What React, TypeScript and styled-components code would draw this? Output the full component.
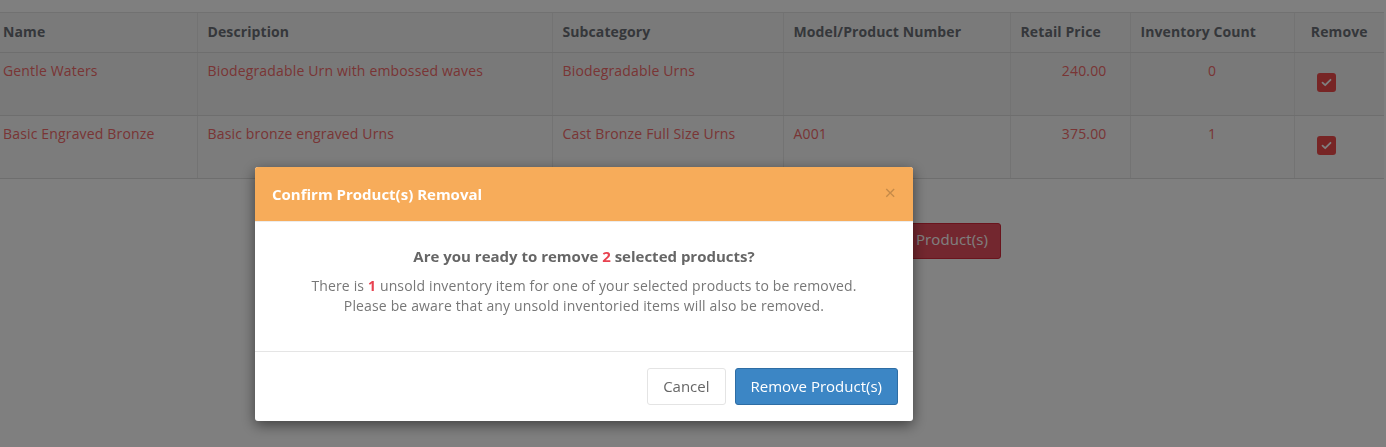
import React from "react";
import styled, { createGlobalStyle } from "styled-components";

const Global = createGlobalStyle`
  html, body { margin: 0; padding: 0; background: #fff; }
  body { font-family: "Open Sans", "Liberation Sans", sans-serif; font-size: 14px; color: #555; }
  * { box-sizing: border-box; }
`;

const Page = styled.div`
  padding-top: 12px;
  min-height: 447px;
`;

const Table = styled.table`
  border-collapse: collapse;
  table-layout: fixed;
  width: 1384px;
  background: #f5f5f5;
`;

const Th = styled.th<{ $align?: string }>`
  text-align: ${(p) => p.$align || "left"};
  font-weight: 700;
  color: #6a6f76;
  padding: 9px 10px 10px;
  line-height: 20px;
  letter-spacing: 0.1px;
  border-top: 1px solid #e2e2e2;
  border-bottom: 1px solid #dcdcdc;
  border-left: 1px solid #e6e6e6;
  &:first-child { border-left: none; padding-left: 3px; }
`;

const Tr = styled.tr<{ $alt?: boolean }>`
  background: ${(p) => (p.$alt ? "#f8f8f8" : "#f3f3f3")};
`;

const Td = styled.td<{ $align?: string; $pr?: number }>`
  vertical-align: top;
  text-align: ${(p) => p.$align || "left"};
  color: #f26a6a;
  height: 63px;
  padding: 8px ${(p) => (p.$pr ?? 10)}px 8px 10px;
  line-height: 20px;
  letter-spacing: 0.16px;
  border-bottom: 1px solid #dcdcdc;
  border-left: 1px solid #e6e6e6;
  &:first-child { border-left: none; padding-left: 3px; }
`;

const Check = styled.span`
  display: inline-flex;
  align-items: center;
  justify-content: center;
  width: 19px;
  height: 19px;
  border-radius: 3px;
  background: #ef4a4a;
  margin-top: 12px;
  margin-left: 12px;
`;

const Actions = styled.div`
  display: flex;
  justify-content: flex-end;
  width: 1001px;
  margin-top: 44px;
`;

const DangerButton = styled.button`
  font-family: inherit;
  font-size: 15px;
  line-height: 20px;
  letter-spacing: 0.1px;
  color: #fff;
  background: #e74f5e;
  border: 1px solid #d4283a;
  border-radius: 3px;
  padding: 5px 12px 9px;
`;

const Backdrop = styled.div`
  position: fixed;
  inset: 0;
  background: rgba(0, 0, 0, 0.5);
`;

const ModalLayer = styled.div`
  position: fixed;
  inset: 0;
  padding: 167px 0 0 255px;
`;

const Modal = styled.div`
  width: 658px;
  background: #fff;
  border-radius: 3px;
  box-shadow: 0 4px 14px rgba(0, 0, 0, 0.5);
  overflow: hidden;
`;

const ModalHeader = styled.div`
  height: 55px;
  background: #f7ac5a;
  display: flex;
  align-items: center;
  justify-content: space-between;
  padding: 0 17px;
  border-bottom: 1px solid #ececec;
`;

const Title = styled.h4`
  margin: 0;
  font-size: 15px;
  font-weight: 700;
  color: #fff;
`;

const Close = styled.span`
  font-size: 20px;
  line-height: 20px;
  color: #c58a48;
  font-weight: 400;
  margin-top: -2px;
`;

const ModalBody = styled.div`
  height: 129px;
  padding: 23px 15px 0;
  text-align: center;
`;

const Question = styled.p`
  margin: 0 0 9px;
  font-size: 15px;
  font-weight: 700;
  color: #666;
  line-height: 22px;
`;

const Info = styled.p`
  margin: 0;
  color: #777;
  font-size: 14px;
  line-height: 20px;
  letter-spacing: 0.15px;
`;

const Hi = styled.span`
  color: #e84250;
  font-weight: 700;
`;

const ModalFooter = styled.div`
  border-top: 1px solid #e5e5e5;
  padding: 16px 15px 16px;
  display: flex;
  justify-content: flex-end;
  gap: 9px;
`;

const Btn = styled.button<{ $primary?: boolean }>`
  font-family: inherit;
  font-size: 15px;
  line-height: 21px;
  padding: 7px 15px;
  border-radius: 3px;
  cursor: pointer;
  color: ${(p) => (p.$primary ? "#fff" : "#666")};
  background: ${(p) => (p.$primary ? "#3c86c5" : "#fff")};
  border: 1px solid ${(p) => (p.$primary ? "#2e6da4" : "#e4e4e4")};
`;

const rows = [
  { name: "Gentle Waters", desc: "Biodegradable Urn with embossed waves", sub: "Biodegradable Urns", model: "", price: "240.00", count: "0" },
  { name: "Basic Engraved Bronze", desc: "Basic bronze engraved Urns", sub: "Cast Bronze Full Size Urns", model: "A001", price: "375.00", count: "1" },
];

const CheckIcon = () => (
  <svg width="11" height="9" viewBox="0 0 11 9">
    <path d="M1.5 4.6 L4.2 7.2 L9.5 1.8" fill="none" stroke="#fff" strokeWidth="1.8" strokeLinecap="round" strokeLinejoin="round" />
  </svg>
);

export default function App() {
  return (
    <>
      <Global />
      <Page>
        <Table>
          <colgroup>
            <col style={{ width: 197 }} />
            <col style={{ width: 355 }} />
            <col style={{ width: 231 }} />
            <col style={{ width: 227 }} />
            <col style={{ width: 120 }} />
            <col style={{ width: 164 }} />
            <col style={{ width: 90 }} />
          </colgroup>
          <thead>
            <tr>
              <Th>Name</Th>
              <Th>Description</Th>
              <Th>Subcategory</Th>
              <Th>Model/Product Number</Th>
              <Th>Retail Price</Th>
              <Th>Inventory Count</Th>
              <Th $align="center">Remove</Th>
            </tr>
          </thead>
          <tbody>
            {rows.map((r, i) => (
              <Tr key={r.name} $alt={i % 2 === 1}>
                <Td>{r.name}</Td>
                <Td>{r.desc}</Td>
                <Td>{r.sub}</Td>
                <Td>{r.model}</Td>
                <Td $align="right" $pr={23}>{r.price}</Td>
                <Td $align="center">{r.count}</Td>
                <Td>
                  <Check><CheckIcon /></Check>
                </Td>
              </Tr>
            ))}
          </tbody>
        </Table>
        <Actions>
          <DangerButton>Remove Product(s)</DangerButton>
        </Actions>
      </Page>
      <Backdrop />
      <ModalLayer>
        <Modal>
          <ModalHeader>
            <Title>Confirm Product(s) Removal</Title>
            <Close>×</Close>
          </ModalHeader>
          <ModalBody>
            <Question>
              Are you ready to remove <Hi>2</Hi> selected products?
            </Question>
            <Info>
              There is <Hi>1</Hi> unsold inventory item for one of your selected products to be removed.
            </Info>
            <Info>Please be aware that any unsold inventoried items will also be removed.</Info>
          </ModalBody>
          <ModalFooter>
            <Btn>Cancel</Btn>
            <Btn $primary>Remove Product(s)</Btn>
          </ModalFooter>
        </Modal>
      </ModalLayer>
    </>
  );
}
